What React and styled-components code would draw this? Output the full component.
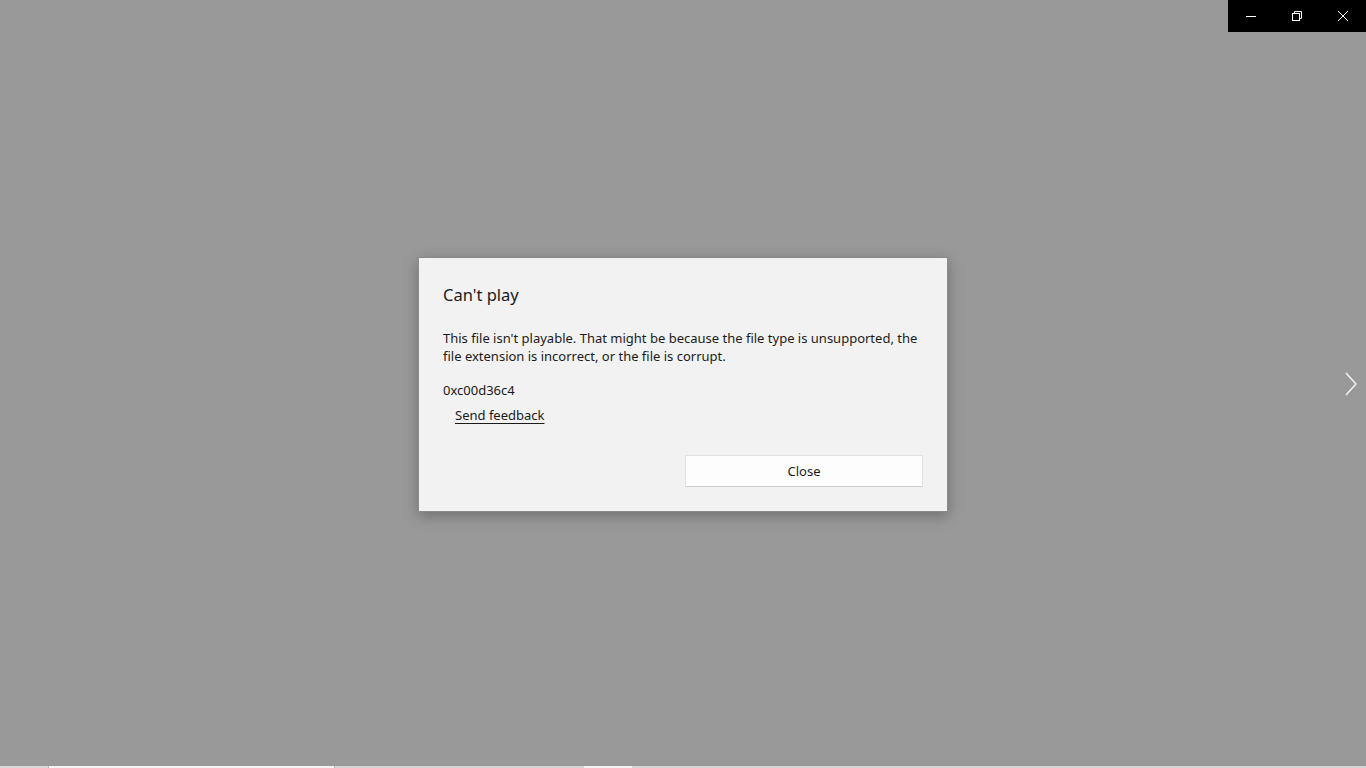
import React from "react"
import styled, { createGlobalStyle } from "styled-components"

const GlobalStyle = createGlobalStyle`
  html, body {
    margin: 0;
    padding: 0;
    height: 100%;
    overflow: hidden;
  }
  body {
    font-family: "Noto Sans", "Open Sans", sans-serif;
    background: #999999;
  }
`

function App() {
  return (
    <>
      <GlobalStyle />
      <Page>
        <Stage>
          <Dialog>
            <Title>Can't play</Title>
            <Message>
              This file isn't playable. That might be because the file type is
              unsupported, the file extension is incorrect, or the file is
              corrupt.
            </Message>
            <ErrorCode>0xc00d36c4</ErrorCode>
            <FeedbackLink href="#">Send feedback</FeedbackLink>
            <Footer>
              <CloseButton>Close</CloseButton>
            </Footer>
          </Dialog>
        </Stage>
        <Strip>
          <Segment tone="#d8d8d8" w={48} />
          <Segment tone="#f4f4f4" w={287} edged />
          <Segment tone="#d4d4d4" w={249} />
          <Segment tone="#f2f2f2" w={48} />
          <Segment tone="#d6d6d6" grow />
        </Strip>

        <WindowControls>
          <ControlButton aria-label="Minimize">
            <svg width="10" height="10" viewBox="0 0 10 10">
              <line x1="0" y1="5.5" x2="10" y2="5.5" stroke="#fff" strokeWidth="1" />
            </svg>
          </ControlButton>
          <ControlButton aria-label="Restore">
            <svg width="10" height="10" viewBox="0 0 10 10" fill="none" stroke="#fff" strokeWidth="1">
              <rect x="0.5" y="2.5" width="7" height="7" />
              <polyline points="2.5,2.5 2.5,0.5 9.5,0.5 9.5,7.5 7.5,7.5" />
            </svg>
          </ControlButton>
          <ControlButton aria-label="Close window">
            <svg width="10" height="10" viewBox="0 0 10 10" stroke="#fff" strokeWidth="1">
              <line x1="0" y1="0" x2="10" y2="10" />
              <line x1="10" y1="0" x2="0" y2="10" />
            </svg>
          </ControlButton>
        </WindowControls>

        <NextArrow aria-label="Next">
          <svg width="12" height="24" viewBox="0 0 12 24" fill="none" stroke="#f0f0f0" strokeWidth="1.6">
            <polyline points="1,1 11,12 1,23" />
          </svg>
        </NextArrow>
      </Page>
    </>
  )
}

export default App

const Page = styled.div`
  position: relative;
  height: 100vh;
  display: flex;
  flex-direction: column;
  background: #999999;
`

const Stage = styled.div`
  flex: 1;
  display: flex;
  align-items: center;
  justify-content: center;
  padding-top: 2px;
`

const Dialog = styled.div`
  width: 530px;
  height: 255px;
  box-sizing: border-box;
  background: #f2f2f2;
  border: 1px solid #8a8a8a;
  box-shadow: 0 4px 14px rgba(0, 0, 0, 0.28);
  padding: 25px 24px 24px 24px;
  display: flex;
  flex-direction: column;
  color: #1a1a1a;
`

const Title = styled.h2`
  margin: 0;
  font-size: 16.5px;
  font-weight: 400;
  line-height: 24px;
  color: #1b1b1b;
`

const Message = styled.p`
  margin: 22px 0 0;
  font-size: 13px;
  line-height: 18px;
  color: #1b1b1b;
`

const ErrorCode = styled.div`
  margin-top: 16px;
  font-size: 13px;
  line-height: 18px;
`

const FeedbackLink = styled.a`
  align-self: flex-start;
  margin: 7px 0 0 12px;
  font-size: 13px;
  line-height: 18px;
  color: #1b1b1b;
  text-decoration: underline;
  text-underline-offset: 3px;
`

const Footer = styled.div`
  margin-top: auto;
  display: flex;
  justify-content: flex-end;
`

const CloseButton = styled.button`
  width: 238px;
  height: 32px;
  background: #fdfdfd;
  border: 1px solid #e2e2e2;
  border-bottom-color: #cfcfcf;
  font-family: "Noto Sans", "Open Sans", sans-serif;
  font-size: 13px;
  color: #1b1b1b;
  cursor: pointer;
`

const Strip = styled.div`
  height: 2px;
  display: flex;
`

const Segment = styled.div`
  height: 2px;
  background: ${(p) => p.tone};
  width: ${(p) => (p.grow ? "auto" : `${p.w}px`)};
  flex: ${(p) => (p.grow ? 1 : "none")};
  box-sizing: border-box;
  border-left: ${(p) => (p.edged ? "1px solid #b8b8b8" : "none")};
  border-right: ${(p) => (p.edged ? "1px solid #b8b8b8" : "none")};
`

const WindowControls = styled.div`
  position: absolute;
  top: 0;
  right: 0;
  display: flex;
  background: #000;
`

const ControlButton = styled.div`
  width: 46px;
  height: 32px;
  display: flex;
  align-items: center;
  justify-content: center;
`

const NextArrow = styled.div`
  position: absolute;
  right: 9px;
  top: 372px;
  display: flex;
`
